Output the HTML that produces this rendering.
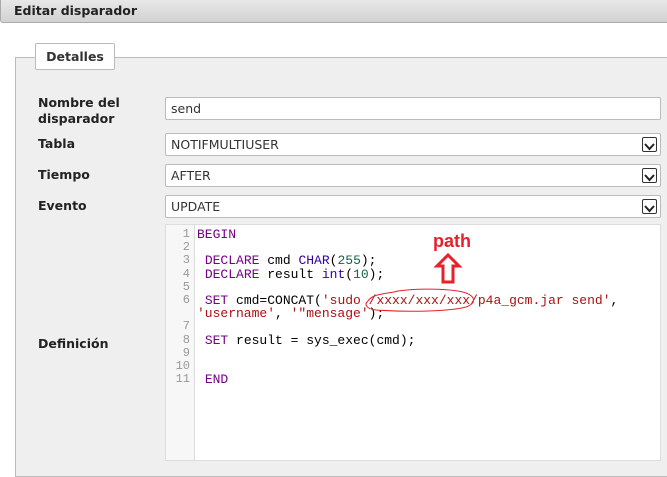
<!DOCTYPE html>
<html><head><meta charset="utf-8"><style>
body{margin:0;width:667px;height:467px;background:#fff;font-family:"DejaVu Sans","Liberation Sans",sans-serif;position:relative;overflow:hidden}
.hdr{position:absolute;left:0;top:0;width:667px;height:23px;background:linear-gradient(#e8e8e8,#d2d2d2);border-bottom:1px solid #aaa;border-left:1px solid #aaa;border-radius:0 0 0 3px;box-sizing:border-box}
.hdr span{position:absolute;left:13px;top:3px;font-size:12.5px;font-weight:bold;color:#222}
.fs{position:absolute;left:15px;top:57px;width:660px;height:420px;background:#efefef;border:1px solid #bbb;box-sizing:border-box}
.leg{position:absolute;left:35px;top:43px;width:80px;height:27px;background:#fff;border:1px solid #bbb;border-radius:2px;box-sizing:border-box;font-size:12.5px;font-weight:bold;color:#333;text-align:center;line-height:26px}
.lab{position:absolute;left:38px;font-size:12.5px;font-weight:bold;color:#222;line-height:16px}
.inp{position:absolute;left:165px;width:496px;height:23px;background:#fff;border:1px solid #bbb;box-sizing:border-box;border-radius:2px;font-size:12.5px;color:#333;padding-left:5px;line-height:21px}
.dd{position:absolute;right:3px;top:3px;width:15px;height:15px;border:1px solid #333;box-sizing:border-box;border-radius:2px}
.ed{position:absolute;left:165px;top:224px;width:496px;height:237px;background:#fff;border:1px solid #ddd;box-sizing:border-box}
.gut{position:absolute;left:0;top:0;width:28px;height:100%;background:#f7f7f7;border-right:1px solid #ddd}
.ln{position:absolute;left:0;top:3px;width:24px;text-align:right;font:12px/13.2px "Liberation Mono",monospace;color:#999}
.code{position:absolute;left:31px;top:3px;font:13px/13.2px "Liberation Mono",monospace;color:#000;white-space:pre}
.k{color:#708}.n{color:#164}.s{color:#a11}.b{color:#30a}
</style></head><body>
<div class="hdr"><span>Editar disparador</span></div>
<div class="fs"></div>
<div class="leg">Detalles</div>
<div class="lab" style="top:95px">Nombre del<br>disparador</div>
<div class="inp" style="top:97px">send</div>
<div class="lab" style="top:136px">Tabla</div>
<div class="inp" style="top:133px">NOTIFMULTIUSER<div class="dd"><svg width="13" height="13" viewBox="0 0 13 13"><path d="M2 4l4.5 5 4.5-5" stroke="#222" stroke-width="2" fill="none"/></svg></div></div>
<div class="lab" style="top:167px">Tiempo</div>
<div class="inp" style="top:164px">AFTER<div class="dd"><svg width="13" height="13" viewBox="0 0 13 13"><path d="M2 4l4.5 5 4.5-5" stroke="#222" stroke-width="2" fill="none"/></svg></div></div>
<div class="lab" style="top:198px">Evento</div>
<div class="inp" style="top:195px">UPDATE<div class="dd"><svg width="13" height="13" viewBox="0 0 13 13"><path d="M2 4l4.5 5 4.5-5" stroke="#222" stroke-width="2" fill="none"/></svg></div></div>
<div class="lab" style="top:336px">Definición</div>
<div class="ed"><div class="gut"><div class="ln">1<br>2<br>3<br>4<br>5<br>6<br><br>7<br>8<br>9<br>10<br>11</div></div>
<div class="code"><span class="k">BEGIN</span>

 <span class="k">DECLARE</span> cmd <span class="b">CHAR</span>(<span class="n">255</span>);
 <span class="k">DECLARE</span> result <span class="b">int</span>(<span class="n">10</span>);

 <span class="k">SET</span> cmd=CONCAT(<span class="s">'sudo /xxxx/xxx/xxx/p4a_gcm.jar send'</span>,
<span class="s">'username'</span>, <span class="s">'"mensage'</span>);

 <span class="k">SET</span> result = sys_exec(cmd);


 <span class="k">END</span></div></div>
<svg style="position:absolute;left:360px;top:228px" width="130" height="95">
<text x="73" y="19" font-family="Liberation Sans" font-weight="bold" font-size="18" fill="#e8202a">path</text>
<path d="M88 27l-11 11h6v16h10v-16h6z" fill="none" stroke="#e8202a" stroke-width="3"/>
<path d="M8 73c5-8 20-7 30-10 15-2 40-3 60 0 18 3 20 12 8 16-20 5-60 5-90 3-10-1-12-6-8-9z" fill="none" stroke="#e8202a" stroke-width="1"/>
</svg>
</body></html>
